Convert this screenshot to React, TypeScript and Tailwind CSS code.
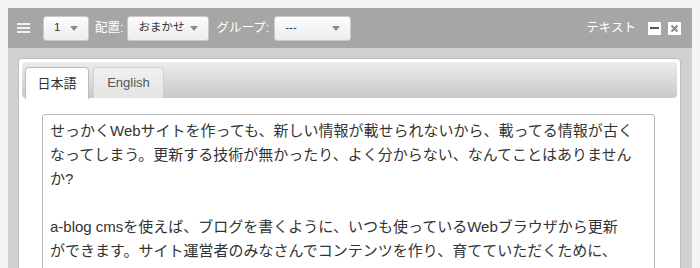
import React from "react";

const FONT = { fontFamily: '"Liberation Sans", "Noto Sans CJK JP", sans-serif' };

function Caret() {
  return (
    <svg width="8" height="5" viewBox="0 0 8 5" className="shrink-0">
      <path d="M0 0 L8 0 L4 5 Z" fill="#8a8a8a" />
    </svg>
  );
}

function Select({ label, width }: { label: string; width: string }) {
  return (
    <div
      className={`${width} h-[25px] flex items-center justify-between pl-[10px] pr-[10px] rounded-[3px] bg-gradient-to-b from-[#fdfdfd] to-[#ececec] border border-[#c9c9c9] text-[11.5px] text-[#333]`}
    >
      <span>{label}</span>
      <Caret />
    </div>
  );
}

const LINES = [
  "せっかくWebサイトを作っても、新しい情報が載せられないから、載ってる情報が古く",
  "なってしまう。更新する技術が無かったり、よく分からない、なんてことはありません",
  "か?",
  "",
  "a-blog cmsを使えば、ブログを書くように、いつも使っているWebブラウザから更新",
  "ができます。サイト運営者のみなさんでコンテンツを作り、育てていただくために、",
];

export default function App() {
  return (
    <div className="w-[700px] h-[268px] bg-[#f5f5f5] overflow-hidden pt-[8px] px-[8px]" style={FONT}>
      <div className="w-[684px] h-[300px] flex flex-col">
        {/* header */}
        <div className="h-[40px] bg-[#a6a6a6] flex items-center pl-[8px] pr-[11px] shrink-0">
          <div className="w-[13px] flex flex-col gap-[2px] ml-[1px]">
            <div className="h-[2px] bg-[#f0f0f0]" />
            <div className="h-[2px] bg-[#f0f0f0]" />
            <div className="h-[2px] bg-[#f0f0f0]" />
          </div>
          <div className="ml-[13px] flex items-center">
            <Select label="1" width="w-[46px]" />
            <span className="ml-[6px] text-[12.5px] text-white">配置:</span>
            <div className="ml-[4px]">
              <Select label="おまかせ" width="w-[82px]" />
            </div>
            <span className="ml-[7px] text-[12.5px] text-white">グループ:</span>
            <div className="ml-[5px]">
              <Select label="---" width="w-[77px]" />
            </div>
          </div>
          <div className="ml-auto flex items-center">
            <span className="text-[12.5px] text-white mr-[12px]">テキスト</span>
            <div className="w-[13px] h-[13px] bg-white flex items-center justify-center">
              <div className="w-[9px] h-[2px] bg-[#555]" />
            </div>
            <div className="ml-[7px] w-[13px] h-[13px] bg-white flex items-center justify-center">
              <svg width="9" height="9" viewBox="0 0 9 9">
                <path d="M1.5 1.5 L7.5 7.5 M7.5 1.5 L1.5 7.5" stroke="#8a8a8a" strokeWidth="2" />
              </svg>
            </div>
          </div>
        </div>
        {/* body */}
        <div className="flex-1 bg-[#d0d0d0] pt-[10px] pl-[10px] pr-[11px]">
          <div className="bg-white border border-[#bdbdbd] rounded-[4px] p-[3px]">
            {/* tab bar */}
            <div className="h-[36px] rounded-[4px] bg-gradient-to-b from-[#ececec] to-[#c9c9c9] flex items-end px-[3px] gap-[4px]">
              <div className="w-[64px] h-[32px] -mb-[1px] bg-white border border-b-0 border-[#bcbcbc] rounded-t-[4px] flex items-center justify-center text-[13px] text-[#333]">
                日本語
              </div>
              <div className="w-[71px] h-[31px] bg-gradient-to-b from-[#f0f0f0] to-[#e4e4e4] border border-b-0 border-[#cfcfcf] rounded-t-[4px] flex items-center justify-center text-[13px] text-[#555]">
                English
              </div>
            </div>
            {/* content */}
            <div className="pt-[16px] pl-[20px]">
              <div className="w-[613px] h-[200px] border border-[#b8b8b8] rounded-[3px] pt-[4px] pl-[7px] pr-[10px] text-[15px] leading-[24px] text-[#333] whitespace-pre">
                {LINES.map((l, i) => (
                  <div key={i} className="h-[24px]">
                    {l}
                  </div>
                ))}
              </div>
            </div>
          </div>
        </div>
      </div>
    </div>
  );
}
